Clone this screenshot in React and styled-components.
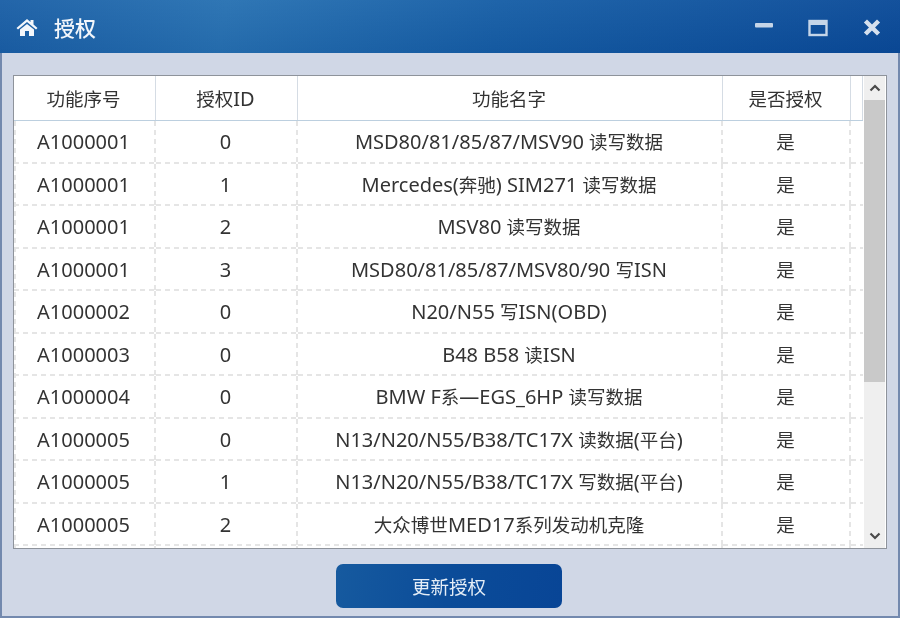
import React from "react";
import styled, { createGlobalStyle } from "styled-components";

const Global = createGlobalStyle`
  html, body { margin: 0; padding: 0; }
  body { width: 900px; height: 618px; overflow: hidden; background: #d0d7e6; }
`;
const FONT = `"Noto Sans", "Noto Sans CJK SC", sans-serif`;
const COLS = "142px 142px 425px 128px 12px";
const DASH_COLOR = "#e5e5e5";
const hDash = `repeating-linear-gradient(90deg, ${DASH_COLOR} 0 5px, transparent 5px 9px)`;
const vDash = `repeating-linear-gradient(180deg, ${DASH_COLOR} 0 5px, transparent 5px 9px)`;

const Window = styled.div`
  width: 900px; height: 618px; box-sizing: border-box;
  display: flex; flex-direction: column;
  background: #d0d7e6;
  border: 2px solid #7389ae; border-top: 0;
  font-family: ${FONT}; color: #333;
  filter: blur(0.35px);
`;
const TitleBar = styled.header`
  height: 53px; margin: 0 -2px; flex: none; box-sizing: border-box;
  display: flex; align-items: center; padding: 2px 18px 0 16px;
  background:
    linear-gradient(180deg, rgba(255,255,255,0.04) 0%, rgba(0,30,90,0.08) 100%),
    linear-gradient(100deg, #1a5fa6 0%, #2771b2 25%, #165ea6 55%, #0a4a98 100%);
  color: #f2f6fb;
`;
const Title = styled.h1`
  margin: 0 0 0 16px; flex: 1; font-size: 21px; font-weight: 500; line-height: 50px;
`;
const WinButtons = styled.div`display: flex; align-items: center; gap: 34px;`;
const TableBox = styled.section`
  margin: 22px 11px 0; height: 474px; box-sizing: border-box; flex: none;
  display: flex; background: #fff; border: 1px solid #8e939b; overflow: hidden;
`;
const Table = styled.div`
  width: 849px; flex: none; overflow: hidden;
  background: ${vDash} no-repeat 0 45px / 2px 100%;
`;
const Row = styled.div`
  display: grid; grid-template-columns: ${COLS}; height: 42.5px;
  font-size: 20px;
`;
const HeadRow = styled(Row)`
  height: 45px; box-sizing: border-box; border-bottom: 1px solid #bccfdf;
`;
const Cell = styled.div`
  display: flex; align-items: center; justify-content: center; box-sizing: border-box;
  white-space: pre; padding: 0 3px 1px 0;
  background:
    ${vDash} no-repeat right 0 / ${(p) => (p.$last ? "0" : "2px")} 100%,
    ${hDash} no-repeat 0 100% / 100% 2px;
`;
const HeadCell = styled.div`
  display: flex; align-items: center; justify-content: center; box-sizing: border-box;
  border-right: 1px solid #d5dce4; white-space: pre; padding-right: 2px;
`;
const Han = styled.span`font-size: 18.5px;`;
const Scrollbar = styled.div`
  width: 21px; flex: none; margin-left: 1px; background: #efefef;
  display: flex; flex-direction: column; height: 472px;
`;
const Arrow = styled.div`
  height: 24px; flex: none; display: flex; align-items: center; justify-content: center;
`;
const Thumb = styled.div`height: 282px; flex: none; background: #c9c9c9;`;
const Track = styled.div`flex: 1;`;
const Footer = styled.div`flex: 1; display: flex; justify-content: center; padding: 15px 2px 0 0;`;
const UpdateButton = styled.button`
  width: 226px; height: 44px; border: 0; border-radius: 7px; flex: none;
  background: linear-gradient(100deg, #165a9f 0%, #0b4c99 50%, #084596 100%);
  color: #e4edf7; font-family: ${FONT}; font-size: 18.5px; padding: 0;
`;

const rows = [
  ["A1000001", "0", "MSD80/81/85/87/MSV90 读写数据"],
  ["A1000001", "1", "Mercedes(奔驰) SIM271 读写数据"],
  ["A1000001", "2", "MSV80 读写数据"],
  ["A1000001", "3", "MSD80/81/85/87/MSV80/90 写ISN"],
  ["A1000002", "0", "N20/N55 写ISN(OBD)"],
  ["A1000003", "0", "B48 B58 读ISN"],
  ["A1000004", "0", "BMW F系—EGS_6HP 读写数据"],
  ["A1000005", "0", "N13/N20/N55/B38/TC17X 读数据(平台)"],
  ["A1000005", "1", "N13/N20/N55/B38/TC17X 写数据(平台)"],
  ["A1000005", "2", "大众博世MED17系列发动机克隆"],
];

const Mixed = ({ text }) => (
  <span>
    {text.split(/([\u4e00-\u9fff]+)/).map((part, i) =>
      i % 2 ? <Han key={i}>{part}</Han> : part
    )}
  </span>
);

const Home = () => (
  <svg width="22" height="19" viewBox="0 0 22 19" fill="#f4f7fb">
    <path d="M11 1 L14.5 4 V2 H17.5 V6.6 L21.5 10 L20 11.6 L11 4.1 L2 11.6 L0.5 10 Z" />
    <path d="M4 11.6 L11 5.9 L18 11.6 V18 H13 V13 H9 V18 H4 Z" />
  </svg>
);
const Min = () => (
  <svg width="20" height="20" viewBox="0 0 20 20"><rect x="1" y="5" width="18" height="4.5" rx="1" fill="#c5d5e8" /></svg>
);
const Max = () => (
  <svg width="20" height="20" viewBox="0 0 20 20" fill="none">
    <rect x="1.5" y="3" width="17" height="14" stroke="#c5d5e8" strokeWidth="2.4" />
    <rect x="1.5" y="3" width="17" height="4" fill="#c5d5e8" />
  </svg>
);
const Close = () => (
  <svg width="20" height="20" viewBox="0 0 20 20">
    <path d="M5 4.5 L15 14.5 M15 4.5 L5 14.5" stroke="#d5e0ee" strokeWidth="4.4" strokeLinecap="square" />
  </svg>
);
const Chevron = ({ down }) => (
  <svg width="12" height="8" viewBox="0 0 12 8" fill="none">
    <path d={down ? "M1.5 1.5 L6 6 L10.5 1.5" : "M1.5 6.5 L6 2 L10.5 6.5"} stroke="#4a4a4a" strokeWidth="2.2" />
  </svg>
);

export default function App() {
  return (
    <>
      <Global />
      <Window>
        <TitleBar>
          <Home />
          <Title>授权</Title>
          <WinButtons><Min /><Max /><Close /></WinButtons>
        </TitleBar>
        <TableBox>
          <Table>
            <HeadRow>
              <HeadCell><Mixed text="功能序号" /></HeadCell>
              <HeadCell><Mixed text="授权ID" /></HeadCell>
              <HeadCell><Mixed text="功能名字" /></HeadCell>
              <HeadCell><Mixed text="是否授权" /></HeadCell>
              <HeadCell />
            </HeadRow>
            {rows.map((r, i) => (
              <Row key={i}>
                <Cell>{r[0]}</Cell>
                <Cell>{r[1]}</Cell>
                <Cell><Mixed text={r[2]} /></Cell>
                <Cell><Mixed text="是" /></Cell>
                <Cell $last />
              </Row>
            ))}
            <Row>
              <Cell /><Cell /><Cell /><Cell /><Cell $last />
            </Row>
          </Table>
          <Scrollbar>
            <Arrow><Chevron /></Arrow>
            <Thumb />
            <Track />
            <Arrow><Chevron down /></Arrow>
          </Scrollbar>
        </TableBox>
        <Footer><UpdateButton>更新授权</UpdateButton></Footer>
      </Window>
    </>
  );
}
